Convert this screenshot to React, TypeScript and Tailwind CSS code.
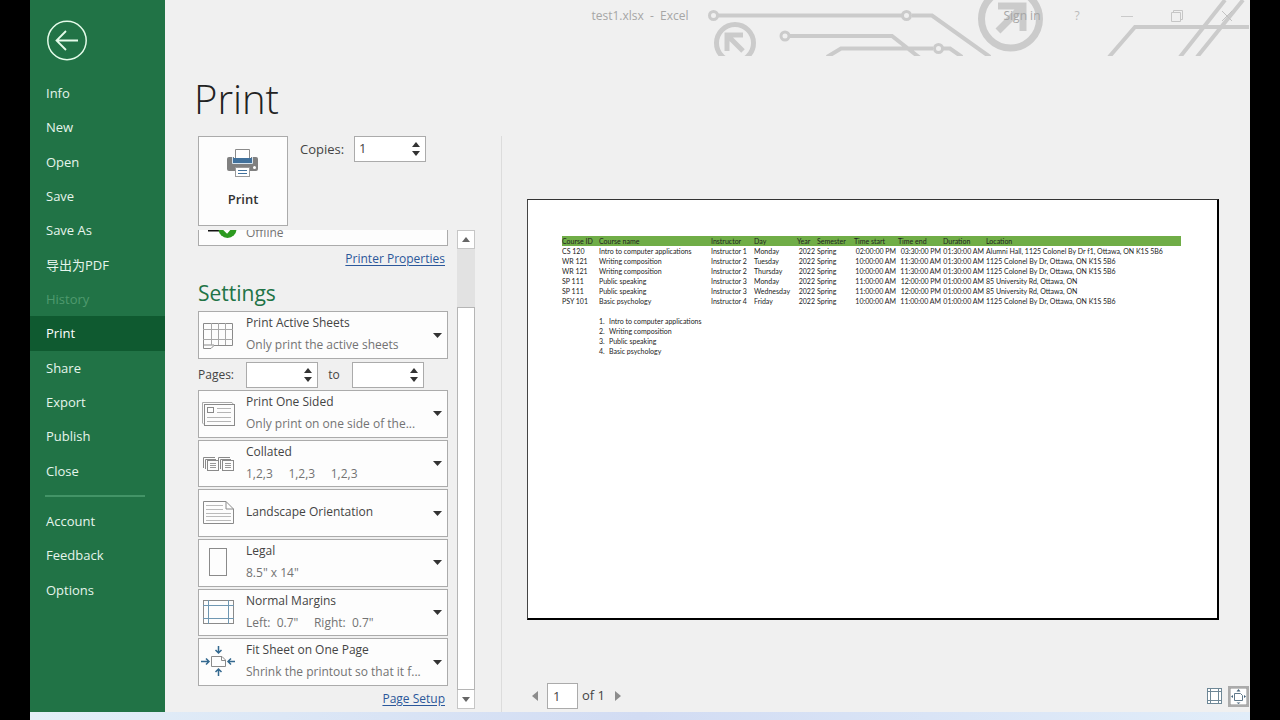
import type { ReactNode } from "react";

const mainNav = ["Info", "New", "Open", "Save", "Save As", "导出为PDF", "History", "Print", "Share", "Export", "Publish", "Close"];
const footNav = ["Account", "Feedback", "Options"];

function NavItem({ label }: { label: string }) {
  const tone =
    label === "Print" ? "bg-[#0f5a30] text-white" : label === "History" ? "text-[#4f9a6e]" : "text-[#e6f5ec]";
  return (
    <button type="button" disabled={label === "History"} className={`flex w-full flex-1 items-center pl-4 text-left text-[13px] leading-5 ${tone}`}>
      {label}
    </button>
  );
}

function Circuit() {
  return (
    <svg className="absolute top-0 right-0" width="550" height="56" viewBox="700 0 550 56" fill="none" stroke="#cbcbcb" strokeWidth="4" aria-hidden="true">
      <path d="M718 15.5H902M912 15.5H932L990 57M790 36H892L920 58M827 57L841 48.500H933M943 48.500H950L962 57M1109 57L1135 27H1249M1180 57L1225 0M1197 57L1243 0" />
      <g strokeWidth="3">
        <circle cx="713.500" cy="15.500" r="4" />
        <circle cx="906.500" cy="15.500" r="4" />
        <circle cx="785" cy="36" r="4" />
        <circle cx="938.500" cy="48.500" r="4" />
      </g>
      <circle cx="735" cy="43" r="18.500" strokeWidth="5" />
      <path d="M727 51V35H743M728 36L743 51" strokeWidth="5" />
      <circle cx="1010.500" cy="19" r="29" strokeWidth="7" />
      <path d="M998 6H1023V31M1022 7L998 31" strokeWidth="7" />
    </svg>
  );
}

function Spinner({ id, label, value }: { id: string; label: string; value: string }) {
  return (
    <div className="flex h-[26px] w-[72px] border border-[#ababab] bg-white pr-px">
      <input id={id} aria-label={label} defaultValue={value} className="w-0 flex-1 bg-transparent pl-1 text-[13px] text-[#444] outline-none" />
      <div className="flex w-4 flex-col items-center justify-center gap-1">
        <button type="button" aria-label={`Increase ${label}`}>
          <svg className="block" width="8" height="5" viewBox="0 0 8 5"><path d="M0 5L4 0L8 5Z" fill="#333" /></svg>
        </button>
        <button type="button" aria-label={`Decrease ${label}`}>
          <svg className="block" width="8" height="5" viewBox="0 0 8 5"><path d="M0 0L4 5L8 0Z" fill="#333" /></svg>
        </button>
      </div>
    </div>
  );
}

function Option({ icon, title, detail }: { icon: ReactNode; title: string; detail?: string }) {
  return (
    <button type="button" aria-haspopup="listbox" className="flex min-h-0 w-full flex-1 items-center border border-[#ababab] bg-[#fdfdfd] pr-[5px] text-left text-[12px]">
      <span className="flex w-[38px] shrink-0 items-center justify-center">{icon}</span>
      <span className="ml-[9px] flex min-w-0 flex-1 flex-col pb-[2px]">
        <span className="leading-[22px] text-[#444]">{title}</span>
        {detail && <span className="leading-[22px] whitespace-pre text-[#737373]">{detail}</span>}
      </span>
      <svg className="shrink-0" width="9" height="5" viewBox="0 0 9 5"><path d="M0 0L4.500 5L9 0Z" fill="#333" /></svg>
    </button>
  );
}

const iconProps = { width: 36, height: 34, viewBox: "0 0 36 34", fill: "none", stroke: "#8a8a8a", strokeWidth: 1, "aria-hidden": true } as const;

const SheetsIcon = () => (
  <svg {...iconProps}>
    <path d="M3.500 27V5.500H32.500V27.500H14L11 30.500H3.500V27H14" />
    <path d="M11.500 5V27M18.500 5V27M25.500 5V27M3 11.500H33M3 21.500H33" stroke="#a8a8a8" />
  </svg>
);
const OneSidedIcon = () => (
  <svg {...iconProps}>
    <path d="M4 27.500L2.500 26V5.500H32L33.500 7.500" stroke="#aaa" />
    <rect x="4.500" y="7.500" width="30" height="21" fill="#fdfdfd" />
    <rect x="7.500" y="10.500" width="6" height="5" />
    <path d="M17 11.500H31M17 15.500H31M7 20.500H31M7 24.500H31" stroke="#b5b5b5" />
  </svg>
);
const CollatedIcon = () => (
  <svg {...iconProps}>
    {[0, 15].map((x) => (
      <g key={x} transform={`translate(${x} 0)`}>
        <path d="M3.500 21V10.500H15M5.500 22V12.500H16" />
        <rect x="7.500" y="13.500" width="11" height="10" fill="#fdfdfd" />
        <path d="M10 16.500H16M10 18.500H16M10 20.500H16" stroke="#999" />
      </g>
    ))}
  </svg>
);
const LandscapeIcon = () => (
  <svg {...iconProps}>
    <path d="M3.500 5.500H26L33.500 13V27.500H3.500ZM26 5.500V13H33.500" />
    <path d="M6 9.500H23M6 13.500H23M6 17.500H31M6 20.500H31M6 24.500H31" stroke="#bbb" />
  </svg>
);
const LegalIcon = () => (
  <svg {...iconProps}><rect x="9.500" y="2.500" width="17" height="27" /></svg>
);
const MarginsIcon = () => (
  <svg {...iconProps}>
    <rect x="3.500" y="4.500" width="30" height="23" />
    <path d="M8.500 4V28M28.500 4V28M3 9.500H34M3 22.500H34" stroke="#6f97b2" />
  </svg>
);
const FitIcon = () => (
  <svg {...iconProps}>
    <path d="M11.500 11.500H22L25.500 15V21.500H11.500ZM21.500 11.500V15.500H25.500" />
    <path d="M18.500 1V8M15.500 5L18.500 8L21.500 5M18.500 31V24M15.500 27L18.500 24L21.500 27M1 16.500H9M6 13.500L9 16.500L6 19.500M35 16.500H28M31 13.500L28 16.500L31 19.500" stroke="#33688f" strokeWidth="1.500" />
  </svg>
);

const columns = ["Course ID", "Course name", "Instructor", "Day", "Year", "Semester", "Time start", "Time end", "Duration", "Location"];
const ottawa = "1125 Colonel By Dr, Ottawa, ON K1S 5B6";
const courses = [
  ["CS 120", "Intro to computer applications", "Instructor 1", "Monday", "2022", "Spring", "02:00:00 PM", "03:30:00 PM", "01:30:00 AM", "Alumni Hall, 1125 Colonel By Dr f1, Ottawa, ON K1S 5B6"],
  ["WR 121", "Writing composition", "Instructor 2", "Tuesday", "2022", "Spring", "10:00:00 AM", "11:30:00 AM", "01:30:00 AM", ottawa],
  ["WR 121", "Writing composition", "Instructor 2", "Thursday", "2022", "Spring", "10:00:00 AM", "11:30:00 AM", "01:30:00 AM", ottawa],
  ["SP 111", "Public speaking", "Instructor 3", "Monday", "2022", "Spring", "11:00:00 AM", "12:00:00 PM", "01:00:00 AM", "85 University Rd, Ottawa, ON"],
  ["SP 111", "Public speaking", "Instructor 3", "Wednesday", "2022", "Spring", "11:00:00 AM", "12:00:00 PM", "01:00:00 AM", "85 University Rd, Ottawa, ON"],
  ["PSY 101", "Basic psychology", "Instructor 4", "Friday", "2022", "Spring", "10:00:00 AM", "11:00:00 AM", "01:00:00 AM", ottawa],
];
const summary = ["Intro to computer applications", "Writing composition", "Public speaking", "Basic psychology"];
const rightAligned = [4, 6, 7, 8];

function PreviewPage() {
  return (
    <article className="mr-[31px] ml-[25px] h-[421px] overflow-hidden border-t border-r-2 border-b-2 border-l border-black border-t-[#333] border-l-[#444] bg-white pt-9 pr-9 pl-[34px] font-['Lato',sans-serif] text-[7px] leading-[10px] text-[#222]">
      <table className="w-full table-fixed border-collapse whitespace-nowrap">
        <colgroup>
          <col className="w-[37px]" />
          <col className="w-[112px]" />
          <col className="w-[43px]" />
          <col className="w-[43px]" />
          <col className="w-[20px]" />
          <col className="w-[37px]" />
          <col className="w-[44px]" />
          <col className="w-[45px]" />
          <col className="w-[43px]" />
          <col />
        </colgroup>
        <thead className="bg-[#70ad47]">
          <tr>
            {columns.map((c) => (
              <th key={c} scope="col" className="h-[10px] p-0 text-left font-normal">{c}</th>
            ))}
          </tr>
        </thead>
        <tbody>
          {courses.map((row, r) => (
            <tr key={r}>
              {row.map((cell, i) => (
                <td key={i} className={rightAligned.includes(i) ? "h-[10px] p-0 pr-[2px] text-right" : "h-[10px] p-0"}>{cell}</td>
              ))}
            </tr>
          ))}
        </tbody>
      </table>
      <ol className="mt-[10px] ml-[37px]">
        {summary.map((s, i) => (
          <li key={s} className="flex"><span className="w-[10px]">{i + 1}.</span>{s}</li>
        ))}
      </ol>
    </article>
  );
}

export default function App() {
  return (
    <div className="flex min-h-screen flex-col bg-black px-[30px] font-['Open_Sans','Noto_Sans_CJK_SC',sans-serif]">
      <div className="flex flex-1">
        <aside className="flex w-[135px] shrink-0 flex-col bg-[#217346]">
          <button type="button" aria-label="Back" className="mt-5 mb-[15px] ml-4">
            <svg className="block" width="41" height="41" viewBox="0 0 41 41" fill="none" stroke="#e4fbe9">
              <circle cx="21" cy="20.500" r="19.200" strokeWidth="1.500" />
              <path d="M32 20.500H11M20 11L10.500 20.500L20 30" strokeWidth="1.800" />
            </svg>
          </button>
          <nav className="flex h-[412px] flex-col">
            {mainNav.map((n) => <NavItem key={n} label={n} />)}
          </nav>
          <hr className="mt-[7px] mr-5 mb-[7px] ml-[15px] border-t-2 border-[#439467]" />
          <nav className="flex h-[103px] flex-col">
            {footNav.map((n) => <NavItem key={n} label={n} />)}
          </nav>
        </aside>

        <main className="flex min-w-0 flex-1 flex-col bg-[#f0f0f0]">
          <header className="relative flex h-14 items-start overflow-hidden pt-[6px] text-[12px] leading-5 text-[#a6a6a6]">
            <Circuit />
            <div className="relative flex-1 pl-[114px] text-center whitespace-pre">test1.xlsx  -  Excel</div>
            <div className="relative flex items-center">
              <button type="button" className="w-[42px] text-center whitespace-nowrap">Sign in</button>
              <button type="button" aria-label="Help" className="ml-6 w-5 text-[#bbb]">?</button>
              <button type="button" aria-label="Minimize" className="ml-[34px]">
                <svg width="12" height="12" viewBox="0 0 12 12" stroke="#cacaca"><path d="M0 6.500H12" /></svg>
              </button>
              <button type="button" aria-label="Restore" className="ml-[38px]">
                <svg width="12" height="12" viewBox="0 0 12 12" fill="none" stroke="#c6c6c6"><path d="M.500 2.500H9.500V11.500H.500ZM2.500 2.500V.500H11.500V9.500H9.500" /></svg>
              </button>
              <button type="button" aria-label="Close" className="mr-[17px] ml-[38px]">
                <svg width="12" height="12" viewBox="0 0 12 12" stroke="#c2c2c2"><path d="M1 1L11 11M11 1L1 11" /></svg>
              </button>
            </div>
          </header>
          <h1 className="h-20 pt-4 pl-[29px] text-[40px] leading-[54px] font-light text-[#222]">Print</h1>

          <div className="flex flex-1">
            <section className="flex w-[337px] shrink-0 flex-col border-r border-[#dcdcdc] pl-[33px]">
              <div className="flex">
                <button type="button" className="flex h-[90px] w-[90px] flex-col items-center border border-[#ababab] bg-[#fdfdfd] pt-3 text-[13px] font-semibold text-[#333]">
                  <svg width="34" height="28" viewBox="0 0 34 28" aria-hidden="true">
                    <rect x="1" y="8" width="31" height="14" rx="2" fill="#808080" />
                    <rect x="8" y="7" width="17" height="7" fill="#fff" />
                    <path d="M9.500 9V.500H23.500V9" fill="#fff" stroke="#8a8a8a" />
                    <rect x="7" y="9" width="19" height="5" fill="#41719c" />
                    <path d="M6.500 8V14.500H26.500V8" fill="none" stroke="#d5e3ee" />
                    <rect x="9.500" y="18.500" width="14" height="9" fill="#fff" stroke="#9a9a9a" />
                    <path d="M12 21.500H21M12 24.500H21" stroke="#41719c" />
                    <circle cx="28.500" cy="18.500" r="1.500" fill="#fff" />
                  </svg>
                  <span className="mt-3 leading-5">Print</span>
                </button>
                <label htmlFor="copies" className="ml-3 w-[54px] text-[13px] leading-[27px] text-[#444]">Copies:</label>
                <Spinner id="copies" label="Copies" value="1" />
              </div>

              <div className="mt-1 flex flex-1 gap-[9px]">
                <div className="flex w-[250px] flex-col">
                  <div className="flex h-4 items-end overflow-hidden">
                    <button type="button" aria-haspopup="listbox" className="flex h-12 w-full shrink-0 items-end border border-[#ababab] bg-[#fdfdfd] text-[12px] text-[#737373]">
                      <svg width="47" height="32" viewBox="0 0 47 32" aria-hidden="true">
                        <path d="M9 17.500H21" stroke="#111" strokeWidth="2" />
                        <circle cx="28.500" cy="16" r="9" fill="#2c9a1f" />
                        <path d="M24 15L28 19L33 13" fill="none" stroke="#fff" strokeWidth="2.500" />
                      </svg>
                      <span className="pb-[1px] leading-[22px]">Offline</span>
                    </button>
                  </div>
                  <div className="flex h-[26px] items-center justify-end pr-[3px]">
                    <a href="#printer" className="text-[12px] leading-5 text-[#2b579a] underline underline-offset-2">Printer Properties</a>
                  </div>
                  <h2 className="h-[39px] text-[21px] leading-[43px] text-[#217346]">Settings</h2>
                  <div className="flex h-12">
                    <Option icon={<SheetsIcon />} title="Print Active Sheets" detail="Only print the active sheets" />
                  </div>
                  <div className="flex h-[31px] items-center text-[12px] text-[#444]">
                    <label htmlFor="from" className="w-12">Pages:</label>
                    <Spinner id="from" label="First page" value="" />
                    <label htmlFor="to" className="w-[34px] pr-[2px] text-center">to</label>
                    <Spinner id="to" label="Last page" value="" />
                  </div>
                  <div className="flex h-[296px] flex-col gap-[2px]">
                    <Option icon={<OneSidedIcon />} title="Print One Sided" detail="Only print on one side of the..." />
                    <Option icon={<CollatedIcon />} title="Collated" detail="1,2,3     1,2,3     1,2,3" />
                    <Option icon={<LandscapeIcon />} title="Landscape Orientation" />
                    <Option icon={<LegalIcon />} title="Legal" detail={'8.5" x 14"'} />
                    <Option icon={<MarginsIcon />} title="Normal Margins" detail={'Left:  0.7"     Right:  0.7"'} />
                    <Option icon={<FitIcon />} title="Fit Sheet on One Page" detail="Shrink the printout so that it f..." />
                  </div>
                  <div className="flex h-[26px] items-center justify-end pr-[3px]">
                    <a href="#setup" className="text-[12px] leading-5 text-[#2b579a] underline underline-offset-2">Page Setup</a>
                  </div>
                </div>
                <div className="mb-[3px] flex w-[18px] flex-col bg-[#e2e2e2]">
                  <button type="button" aria-label="Scroll up" className="flex h-[19px] items-center justify-center border border-[#c6c6c6] bg-white">
                    <svg width="8" height="5" viewBox="0 0 8 5"><path d="M0 5L4 0L8 5Z" fill="#666" /></svg>
                  </button>
                  <div className="mt-[58px] flex-1 border border-[#b5b5b5] bg-white" />
                  <button type="button" aria-label="Scroll down" className="flex h-[19px] items-center justify-center border border-t-0 border-[#c6c6c6] bg-white">
                    <svg width="8" height="5" viewBox="0 0 8 5"><path d="M0 0L4 5L8 0Z" fill="#666" /></svg>
                  </button>
                </div>
              </div>
            </section>

            <section className="flex min-w-0 flex-1 flex-col pt-[63px]">
              <PreviewPage />
              <div className="mt-auto mb-[3px] flex h-[26px] items-center pr-[1px] pl-[30px] text-[13px] text-[#444]">
                <button type="button" aria-label="Previous page">
                  <svg className="block" width="6" height="10" viewBox="0 0 6 10"><path d="M6 0V10L0 5Z" fill="#8c8c8c" /></svg>
                </button>
                <input aria-label="Current page" defaultValue="1" className="ml-[9px] h-[26px] w-[31px] border border-[#ababab] bg-white pl-[5px] text-[13px] outline-none" />
                <span className="ml-1">of 1</span>
                <button type="button" aria-label="Next page" className="ml-[10px]">
                  <svg className="block" width="6" height="10" viewBox="0 0 6 10"><path d="M0 0V10L6 5Z" fill="#8c8c8c" /></svg>
                </button>
                <button type="button" aria-label="Show margins" className="ml-auto">
                  <svg className="block" width="15" height="16" viewBox="0 0 15 16" fill="#fff" stroke="#6e8796">
                    <rect x=".500" y=".500" width="14" height="15" />
                    <path d="M3.500 0V16M11.500 0V16M0 3.500H15M0 12.500H15" />
                  </svg>
                </button>
                <button type="button" aria-label="Zoom to page" className="ml-[6px] border-2 border-[#ababab] bg-[#d0d0d0]">
                  <svg className="block" width="17" height="17" viewBox="0 0 17 17" fill="#fff" stroke="#61798a">
                    <rect x="0" y="0" width="17" height="17" stroke="#8a8a8a" />
                    <path d="M4.500 5.500H10.500L12.500 7.500V12.500H4.500Z" />
                    <path d="M8.500 1L6.500 3.500H10.500ZM8.500 16L6.500 14.500H10.500ZM1 8.500L3 7V10ZM16 8.500L14 7V10Z" fill="#46647a" stroke="none" />
                  </svg>
                </button>
              </div>
            </section>
          </div>
        </main>
      </div>
      <div className="h-2 bg-linear-to-r from-[#e3eff8] via-[#d2dcf3] to-[#e1edf9]" />
    </div>
  );
}
